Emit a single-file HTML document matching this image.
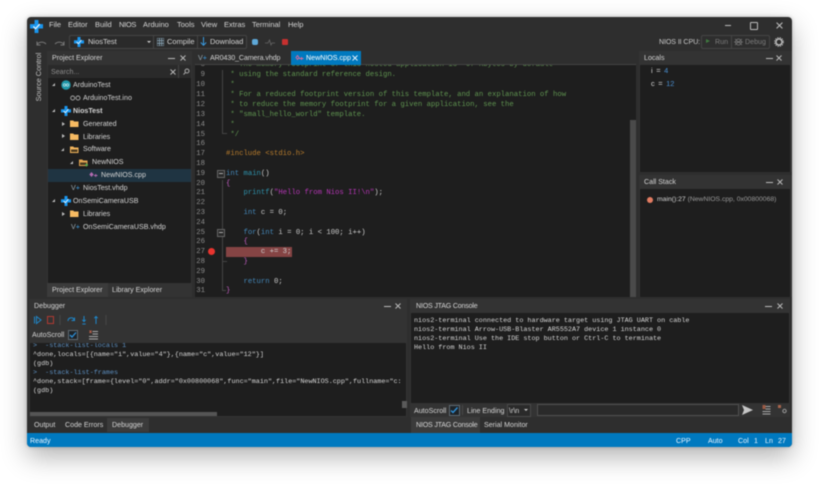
<!DOCTYPE html>
<html><head><meta charset="utf-8"><style>
html,body{margin:0;padding:0;background:#fff;width:819px;height:492px;overflow:hidden}
#s{position:absolute;left:0;top:0;width:819px;height:492px;overflow:hidden;filter:blur(.42px)}
.a,.t,.m,.b{position:absolute}
.t{font:7.1px/10px "Liberation Sans",sans-serif;color:#d4d4d4;white-space:nowrap;transform:translateY(-5px)}
.u{font-size:7.5px}
.m{font:7.28px/10px "Liberation Mono",monospace;color:#cccccc;white-space:pre;transform:translateY(-5px)}
.c{font-size:6.75px;color:#d6d6d6}
.n{color:#8e8e8e;width:13px;text-align:right}
.g{color:#5f9450}.k{color:#4488ba}.f{color:#2f93ad}.p{color:#b535b5}.y{color:#b87c2c}.v{color:#c55fc5}
.b{background:#1e1e1e}
</style></head><body><div id="s">
<svg width="0" height="0" style="position:absolute"><defs>
<g id="lg"><path d="M3.500 0h3v3.200h3.500v3.300h-3.500v3.500h-3v-3.500h-3.500v-3.300h3.500z" fill="#1a96ee"/><path d="M2.600 5l1.700 1.700 3.200-3.600" stroke="#dff2ff" stroke-width="1" fill="none"/></g>
<g id="fo"><path d="M0 1.500h3.200l1 1h4.300v5.500h-8.500z" fill="#f6ba62"/></g>
<g id="cl"><path d="M.5.500l5 5M5.500.500l-5 5" stroke="#bdbdbd" stroke-width=".9" fill="none"/></g>
</defs></svg>

<!-- window -->
<div class="a" style="left:27px;top:17px;width:765px;height:430px;background:#2e2e2e;border-radius:4px;box-shadow:0 10px 26px rgba(0,0,0,.3),0 0 5px rgba(0,0,0,.22);overflow:hidden"></div>

<!-- title bar -->
<svg class="a" style="left:30px;top:20px" width="13" height="13" viewBox="0 0 10 10"><use href="#lg"/></svg>
<div class="t u" style="left:49px;top:25px">File</div>
<div class="t u" style="left:68px;top:25px">Editor</div>
<div class="t u" style="left:95px;top:25px">Build</div>
<div class="t u" style="left:119px;top:25px;letter-spacing:-.3px">NIOS</div>
<div class="t u" style="left:143px;top:25px">Arduino</div>
<div class="t u" style="left:177px;top:25px">Tools</div>
<div class="t u" style="left:201px;top:25px">View</div>
<div class="t u" style="left:224px;top:25px">Extras</div>
<div class="t u" style="left:252px;top:25px">Terminal</div>
<div class="t u" style="left:288px;top:25px">Help</div>
<div class="a" style="left:725px;top:25px;width:6px;height:1px;background:#bbb"></div>
<div class="a" style="left:750px;top:22px;width:6px;height:6px;border:1px solid #bbb;border-radius:1px"></div>
<svg class="a" style="left:776px;top:22px" width="7" height="7" viewBox="0 0 6 6"><use href="#cl"/></svg>

<!-- toolbar -->
<svg class="a" style="left:35px;top:39px" width="32" height="8" fill="none" stroke="#777" stroke-width="1"><path d="M2 6c1-3 6-4 9-1M2 2.500v3.500h3.500"/><path d="M29 6c-1-3-6-4-9-1M29 2.500v3.500h-3.500"/></svg>
<div class="a" style="left:69px;top:35px;width:176px;height:12px;border:1px solid #454545;border-radius:2px;background:#2a2a2a"></div>
<div class="a" style="left:153px;top:36px;width:1px;height:12px;background:#444"></div>
<div class="a" style="left:197px;top:36px;width:1px;height:12px;background:#444"></div>
<svg class="a" style="left:74px;top:37px" width="10" height="10" viewBox="0 0 10 10"><use href="#lg"/></svg>
<div class="t u" style="left:88px;top:42px">NiosTest</div>
<div class="a" style="left:147px;top:41px;border:2.200px solid transparent;border-top:2.500px solid #ccc;border-bottom:0"></div>
<svg class="a" style="left:157px;top:38px" width="7" height="8"><path d="M0 0h7v8h-7zM2.400 0v8M4.700 0v8M0 2.600h7M0 5.300h7" stroke="#8aa6b8" stroke-width=".8" fill="none"/></svg>
<div class="t u" style="left:167px;top:42px">Compile</div>
<svg class="a" style="left:200px;top:37px" width="7" height="10" fill="none" stroke="#3a9be0" stroke-width="1"><path d="M3.500 0v8M.8 5.500l2.700 2.800 2.700-2.800"/></svg>
<div class="t u" style="left:210px;top:42px">Download</div>
<div class="a" style="left:252px;top:39px;width:6px;height:6px;background:#5ea8d8;border-radius:2px"></div>
<svg class="a" style="left:265px;top:39px" width="10" height="7" fill="none" stroke="#666" stroke-width=".8"><path d="M0 4h3l1.500-3 1.500 5 1-2h3"/></svg>
<div class="a" style="left:282px;top:39px;width:6px;height:6px;background:#c6302f;border-radius:1px"></div>

<div class="t" style="left:659px;top:42px;color:#c8c8c8;letter-spacing:-.1px">NIOS II CPU:</div>
<div class="a" style="left:701px;top:35px;width:67px;height:12px;border:1px solid #454545;border-radius:2px"></div>
<div class="a" style="left:731px;top:36px;width:1px;height:12px;background:#454545"></div>
<div class="a" style="left:706px;top:39px;border-left:4px solid #3f7a3f;border-top:2.500px solid transparent;border-bottom:2.500px solid transparent"></div>
<div class="t" style="left:715px;top:42px;color:#7c7c7c">Run</div>
<svg class="a" style="left:734px;top:37px" width="9" height="10" fill="none" stroke="#777" stroke-width=".7"><circle cx="4.500" cy="5" r="3"/><path d="M0 5h9M1 2l7 6M8 2l-7 6"/></svg>
<div class="t" style="left:745px;top:42px;color:#7c7c7c">Debug</div>
<svg class="a" style="left:774px;top:37px" width="10" height="10" fill="none" stroke="#c4c4c4"><circle cx="5" cy="5" r="3" stroke-width="1.300"/><circle cx="5" cy="5" r="4.300" stroke-width="1" stroke-dasharray="1.300 1"/></svg>

<!-- source control -->
<div class="t" style="left:39px;top:77px;transform:translate(-50%,-50%) rotate(-90deg);color:#c4c4c4;font-size:7.300px">Source Control</div>

<!-- project explorer -->
<div class="a" style="left:47px;top:51px;width:145px;height:246px;background:#333"></div>
<div class="a" style="left:48px;top:78px;width:143px;height:205px;background:#1e1e1e"></div>
<div class="a" style="left:48px;top:65px;width:143px;height:13px;background:#2a2a2a"></div>
<div class="a" style="left:178px;top:65px;width:1px;height:13px;background:#444"></div>
<div class="t" style="left:52px;top:58px">Project Explorer</div>
<div class="a" style="left:168px;top:58px;width:7px;height:1px;background:#bbb"></div>
<svg class="a" style="left:180px;top:55px" width="6" height="6"><use href="#cl"/></svg>
<div class="t" style="left:51px;top:71.500px;color:#8c8c8c">Search...</div>
<svg class="a" style="left:170px;top:69px" width="6" height="6"><use href="#cl"/></svg>
<svg class="a" style="left:183px;top:68px" width="7" height="7" fill="none" stroke="#aaa"><circle cx="4" cy="3" r="2"/><path d="M2.500 4.500l-2 2"/></svg>
<div class="a" style="left:48px;top:169px;width:143px;height:13px;background:#1f3442"></div>

<div class="a" style="left:52px;top:83px;border-left:3px solid transparent;border-bottom:3px solid #bbb"></div>
<svg class="a" style="left:61px;top:80px" width="10" height="10"><circle cx="5" cy="5" r="4.700" fill="#1f97a8"/><circle cx="3.500" cy="5" r="1.200" fill="none" stroke="#d8f0f4" stroke-width=".6"/><circle cx="6.500" cy="5" r="1.200" fill="none" stroke="#d8f0f4" stroke-width=".6"/></svg>
<div class="t" style="left:73px;top:85px">ArduinoTest</div>
<svg class="a" style="left:70px;top:95px" width="11" height="6" fill="none" stroke="#a8a8a8" stroke-width=".9"><circle cx="2.700" cy="3" r="2"/><circle cx="8" cy="3" r="2"/></svg>
<div class="t" style="left:83px;top:98px">ArduinoTest.ino</div>

<div class="a" style="left:52px;top:109px;border-left:3px solid transparent;border-bottom:3px solid #bbb"></div>
<svg class="a" style="left:61px;top:106px" width="10" height="10" viewBox="0 0 10 10"><use href="#lg"/></svg>
<div class="t" style="left:73px;top:110.700px;font-weight:bold">NiosTest</div>

<div class="a" style="left:62px;top:122px;border-left:3px solid #bbb;border-top:2.500px solid transparent;border-bottom:2.500px solid transparent"></div>
<svg class="a" style="left:70px;top:119px" width="9" height="9"><use href="#fo"/></svg>
<div class="t" style="left:83px;top:123.500px">Generated</div>
<div class="a" style="left:62px;top:134px;border-left:3px solid #bbb;border-top:2.500px solid transparent;border-bottom:2.500px solid transparent"></div>
<svg class="a" style="left:70px;top:132px" width="9" height="9"><use href="#fo"/></svg>
<div class="t" style="left:83px;top:136.500px">Libraries</div>
<div class="a" style="left:61px;top:148px;border-left:3px solid transparent;border-bottom:3px solid #bbb"></div>
<svg class="a" style="left:70px;top:145px" width="9" height="9"><path d="M0 1.500h3.200l1 1h4.300v5.500h-8.500z" fill="#f2b45c"/><path d="M1 4.500h6.500v2.500h-6.500z" fill="#4a3a20"/></svg>
<div class="t" style="left:83px;top:149.400px">Software</div>
<div class="a" style="left:70px;top:161px;border-left:3px solid transparent;border-bottom:3px solid #bbb"></div>
<svg class="a" style="left:79px;top:158px" width="9" height="9"><path d="M0 1.500h3.200l1 1h4.300v5.500h-8.500z" fill="#e0a452"/><path d="M1 4.500h6.500v2.500h-6.500z" fill="#4a3a20"/><path d="M6 7h3M7.500 5.500v3" stroke="#4caf50"/></svg>
<div class="t" style="left:92px;top:162.300px">NewNIOS</div>
<svg class="a" style="left:89px;top:172px" width="9" height="6" fill="#b06ab0"><path d="M2.500 0l2.200 2.500-2.200 2.500-2.200-2.500z"/><path d="M5 3.500h3.500M6.700 2v3" stroke="#b06ab0" stroke-width=".9"/></svg>
<div class="t" style="left:101px;top:175.200px">NewNIOS.cpp</div>
<div class="t" style="left:71px;top:188px;color:#9aa8b0">V<span style="color:#3d9be0">+</span></div>
<div class="t" style="left:83px;top:188.200px">NiosTest.vhdp</div>
<div class="a" style="left:52px;top:199px;border-left:3px solid transparent;border-bottom:3px solid #bbb"></div>
<svg class="a" style="left:61px;top:196px" width="10" height="10" viewBox="0 0 10 10"><use href="#lg"/></svg>
<div class="t" style="left:73px;top:201px">OnSemiCameraUSB</div>
<div class="a" style="left:62px;top:212px;border-left:3px solid #bbb;border-top:2.500px solid transparent;border-bottom:2.500px solid transparent"></div>
<svg class="a" style="left:70px;top:209px" width="9" height="9"><use href="#fo"/></svg>
<div class="t" style="left:83px;top:214px">Libraries</div>
<div class="t" style="left:71px;top:227px;color:#9aa8b0">V<span style="color:#3d9be0">+</span></div>
<div class="t" style="left:83px;top:227px">OnSemiCameraUSB.vhdp</div>

<div class="a" style="left:47px;top:283px;width:61px;height:14px;background:#3b3b3b"></div>
<div class="t" style="left:52px;top:290px">Project Explorer</div>
<div class="t" style="left:112px;top:290px">Library Explorer</div>

<!-- editor -->
<div class="a b" style="left:195px;top:65px;width:441px;height:232px"></div>
<div class="a" style="left:195px;top:64px;width:441px;height:1px;background:#444"></div>
<div class="t" style="left:198px;top:57.500px;color:#9aa8b0">V<span style="color:#3d9be0">+</span></div>
<div class="t" style="left:210px;top:57.500px;letter-spacing:-.1px">AR0430_Camera.vhdp</div>
<div class="a" style="left:291px;top:51px;width:70px;height:14px;background:#0079bf"></div>
<svg class="a" style="left:295px;top:55px" width="9" height="6" fill="none" stroke="#e06a9a" stroke-width=".9"><path d="M1 2.500l1.500-2 1.500 2-1.500 2zM4 3.500h4.500M6.500 2v3"/></svg>
<div class="t" style="left:306px;top:57.500px;color:#fff">NewNIOS.cpp</div>
<svg class="a" style="left:352px;top:55px" width="6" height="6"><path d="M.5.500l5 5M5.500.500l-5 5" stroke="#e8f4ff" stroke-width=".9"/></svg>
<div class="a" style="left:222px;top:180px;width:1px;height:110px;background:#444"></div>
<div class="a" style="left:222px;top:70px;width:1px;height:64px;background:#444"></div>
<div class="a" style="left:222px;top:133px;width:5px;height:1px;background:#444"></div>
<div class="a" style="left:222px;top:261px;width:5px;height:1px;background:#444"></div>
<div class="a" style="left:222px;top:290px;width:4px;height:1px;background:#444"></div>
<div class="a" style="left:217px;top:170px;width:6px;height:6px;border:1px solid #666;background:#2a2a2a"></div>
<div class="a" style="left:219px;top:173px;width:4px;height:1px;background:#aaa"></div>
<div class="a" style="left:217px;top:229px;width:6px;height:6px;border:1px solid #666;background:#2a2a2a"></div>
<div class="a" style="left:219px;top:232px;width:4px;height:1px;background:#aaa"></div>
<div class="a" style="left:226px;top:247px;width:66px;height:10px;background:#854444"></div>
<div class="a" style="left:208px;top:248px;width:7px;height:7px;border-radius:50%;background:#e8342f"></div>
<div class="a" style="left:630px;top:120px;width:6px;height:177px;background:#4a4a4a"></div>

<div class="a" style="left:195px;top:65px;width:435px;height:232px;overflow:hidden">
<div class="m n" style="left:-3px;top:0px">8</div><div class="m g" style="left:31px;top:0px"> * The memory footprint of this hosted application is ~67 Kbytes by default</div>
<div class="m n" style="left:-3px;top:10px">9</div><div class="m g" style="left:31px;top:10px"> * using the standard reference design.</div>
<div class="m n" style="left:-3px;top:20px">10</div><div class="m g" style="left:31px;top:20px"> *</div>
<div class="m n" style="left:-3px;top:29.600px">11</div><div class="m g" style="left:31px;top:29.600px"> * For a reduced footprint version of this template, and an explanation of how</div>
<div class="m n" style="left:-3px;top:40px">12</div><div class="m g" style="left:31px;top:40px"> * to reduce the memory footprint for a given application, see the</div>
<div class="m n" style="left:-3px;top:50px">13</div><div class="m g" style="left:31px;top:50px"> * "small_hello_world" template.</div>
<div class="m n" style="left:-3px;top:59.600px">14</div><div class="m g" style="left:31px;top:59.600px"> *</div>
<div class="m n" style="left:-3px;top:69.500px">15</div><div class="m g" style="left:31px;top:69.500px"> */</div>
<div class="m n" style="left:-3px;top:79px">16</div>
<div class="m n" style="left:-3px;top:89px">17</div><div class="m y" style="left:31px;top:89px">#include &lt;stdio.h&gt;</div>
<div class="m n" style="left:-3px;top:99px">18</div>
<div class="m n" style="left:-3px;top:108.700px">19</div><div class="m" style="left:31px;top:108.700px"><span class="k">int</span> <span class="f">main</span>()</div>
<div class="m n" style="left:-3px;top:118.500px">20</div><div class="m v" style="left:31px;top:118.500px">{</div>
<div class="m n" style="left:-3px;top:128.300px">21</div><div class="m" style="left:31px;top:128.300px">    <span class="f">printf</span>(<span class="p">"Hello from Nios II!\n"</span>);</div>
<div class="m n" style="left:-3px;top:138.100px">22</div>
<div class="m n" style="left:-3px;top:147.900px">23</div><div class="m" style="left:31px;top:147.900px">    <span class="k">int</span> c = 0;</div>
<div class="m n" style="left:-3px;top:157.700px">24</div>
<div class="m n" style="left:-3px;top:167.500px">25</div><div class="m" style="left:31px;top:167.500px">    <span class="k">for</span>(<span class="k">int</span> i = 0; i &lt; 100; i++)</div>
<div class="m n" style="left:-3px;top:177.300px">26</div><div class="m v" style="left:31px;top:177.300px">    {</div>
<div class="m n" style="left:-3px;top:187.100px">27</div><div class="m" style="left:31px;top:187.100px">        c += 3;</div>
<div class="m n" style="left:-3px;top:196.900px">28</div><div class="m v" style="left:31px;top:196.900px">    }</div>
<div class="m n" style="left:-3px;top:206.700px">29</div>
<div class="m n" style="left:-3px;top:216.500px">30</div><div class="m" style="left:31px;top:216.500px">    <span class="k">return</span> 0;</div>
<div class="m n" style="left:-3px;top:226.300px">31</div><div class="m v" style="left:31px;top:226.300px">}</div>
</div>

<!-- locals -->
<div class="a" style="left:639px;top:51px;width:153px;height:121px;background:#333"></div>
<div class="a b" style="left:640px;top:65px;width:150px;height:107px"></div>
<div class="t" style="left:644px;top:58px">Locals</div>
<div class="a" style="left:766px;top:58px;width:7px;height:1px;background:#bbb"></div>
<svg class="a" style="left:776px;top:55px" width="6" height="6"><use href="#cl"/></svg>
<div class="t" style="left:651px;top:71px;font-size:7.400px;word-spacing:1.500px">i = <span style="color:#4a8fd0">4</span></div>
<div class="t" style="left:651px;top:84px;font-size:7.400px;word-spacing:1.500px">c = <span style="color:#4a8fd0">12</span></div>

<!-- call stack -->
<div class="a" style="left:639px;top:175px;width:153px;height:122px;background:#333"></div>
<div class="a b" style="left:640px;top:189px;width:150px;height:108px"></div>
<div class="t" style="left:644px;top:182px">Call Stack</div>
<div class="a" style="left:766px;top:182px;width:7px;height:1px;background:#bbb"></div>
<svg class="a" style="left:777px;top:179px" width="6" height="6"><use href="#cl"/></svg>
<div class="a" style="left:647px;top:197px;width:6px;height:6px;border-radius:50%;background:#e27c62"></div>
<div class="t" style="left:657px;top:200px;font-size:6.800px">main():27 <span style="color:#9a9a9a">(NewNIOS.cpp, 0x00800068)</span></div>

<!-- debugger -->
<div class="a" style="left:29px;top:299px;width:378px;height:118px;background:#333"></div>
<div class="a b" style="left:30px;top:343px;width:376px;height:73px"></div>
<div class="t" style="left:34px;top:306px">Debugger</div>
<div class="a" style="left:384px;top:306px;width:7px;height:1px;background:#bbb"></div>
<svg class="a" style="left:395px;top:303px" width="6" height="6"><use href="#cl"/></svg>
<svg class="a" style="left:34px;top:315px" width="76" height="10" fill="none" stroke-width="1"><path d="M.5 1.500v7M2.500 1.500l4.500 3.500-4.500 3.500z" stroke="#1f86c9"/><rect x="13.500" y="1.500" width="6" height="7" stroke="#b03a32"/><path d="M26 0v10M72 0v10" stroke="#484848"/><path d="M34 6c0-3.500 5-4.500 6-1M40.500 2.500v3h-3" stroke="#1f86c9"/><path d="M50 1v5.500M48.300 4.800l1.700 1.700 1.700-1.700M48.300 9h3.400" stroke="#1f86c9"/><path d="M62 9v-7.500M60.300 3.200l1.700-1.700 1.700 1.700" stroke="#1f86c9"/></svg>
<div class="t" style="left:32px;top:335px">AutoScroll</div>
<div class="a" style="left:68px;top:330px;width:8px;height:8px;border:1px solid #5f6a72;background:#1d2328"></div>
<svg class="a" style="left:69px;top:331px" width="8" height="8" fill="none" stroke="#2f90d8" stroke-width="1.300"><path d="M1 4l2 2 4-4.500"/></svg>
<svg class="a" style="left:89px;top:330px" width="9" height="10"><path d="M3.500 1.500h5.500M3.500 4h5.500M0 6.500h9M0 9h9" stroke="#aaa"/><path d="M.5.500l2 2.500M2.500.500l-2 2.500" stroke="#c4654c"/></svg>
<div class="a" style="left:30px;top:412px;width:187px;height:4px;background:#555"></div>
<div class="a" style="left:402px;top:401px;width:5px;height:7px;background:#5a5a5a"></div>
<div class="a" style="left:30px;top:343px;width:376px;height:68px;overflow:hidden;font-size:0">
<div class="m c" style="left:3px;top:3px;color:#5d90c2">&gt;  -stack-list-locals 1</div>
<div class="m c" style="left:3px;top:12px">^done,locals=[{name="i",value="4"},{name="c",value="12"}]</div>
<div class="m c" style="left:3px;top:21px">(gdb)</div>
<div class="m c" style="left:3px;top:30px;color:#5d90c2">&gt;  -stack-list-frames</div>
<div class="m c" style="left:3px;top:39.300px">^done,stack=[frame={level="0",addr="0x00800068",func="main",file="NewNIOS.cpp",fullname="c:</div>
<div class="m c" style="left:3px;top:48.300px">(gdb)</div>
</div>
<div class="t" style="left:34px;top:425px">Output</div>
<div class="t" style="left:65px;top:425px">Code Errors</div>
<div class="a" style="left:107px;top:418px;width:42px;height:14px;background:#3b3b3b"></div>
<div class="t" style="left:112px;top:425px">Debugger</div>

<!-- jtag console -->
<div class="a" style="left:410px;top:299px;width:380px;height:118px;background:#333"></div>
<div class="a b" style="left:411px;top:313px;width:378px;height:90px"></div>
<div class="t" style="left:416px;top:306px;letter-spacing:-.2px">NIOS JTAG Console</div>
<div class="a" style="left:765px;top:306px;width:7px;height:1px;background:#bbb"></div>
<svg class="a" style="left:777px;top:303px" width="6" height="6"><use href="#cl"/></svg>
<div class="m c" style="left:414px;top:320.500px">nios2-terminal connected to hardware target using JTAG UART on cable</div>
<div class="m c" style="left:414px;top:330px">nios2-terminal Arrow-USB-Blaster AR5552A7 device 1 instance 0</div>
<div class="m c" style="left:414px;top:339px">nios2-terminal Use the IDE stop button or Ctrl-C to terminate</div>
<div class="m c" style="left:414px;top:348px">Hello from Nios II</div>
<div class="t" style="left:414px;top:410.500px">AutoScroll</div>
<div class="a" style="left:449px;top:405px;width:9px;height:9px;border:1px solid #5f6a72;background:#1d2328"></div>
<svg class="a" style="left:450px;top:406px" width="9" height="9" fill="none" stroke="#2f90d8" stroke-width="1.400"><path d="M1 4.500l2 2 4.500-5"/></svg>
<div class="a" style="left:462px;top:405px;width:1px;height:10px;background:#484848"></div>
<div class="t" style="left:467px;top:410.500px">Line Ending</div>
<div class="a" style="left:507px;top:404px;width:22px;height:11px;border:1px solid #4a4a4a;background:#2a2a2a"></div>
<div class="t" style="left:509px;top:410.500px">\r\n</div>
<div class="a" style="left:524px;top:409px;border:2px solid transparent;border-top:2.500px solid #ccc;border-bottom:0"></div>
<div class="a" style="left:537px;top:404px;width:200px;height:10px;border:1px solid #4f4f4f;background:#2a2a2a"></div>
<svg class="a" style="left:742px;top:405px" width="12" height="10"><path d="M0 0l11 5-11 5 2-5z" fill="#c6c6c6"/></svg>
<svg class="a" style="left:762px;top:405px" width="9" height="10"><path d="M3.500 1.500h5M3.500 4h5M.5 6.500h8M.5 9h8" stroke="#aaa"/><rect x=".5" y="0" width="3" height="4" fill="#9c5a44"/></svg>
<svg class="a" style="left:778px;top:405px" width="9" height="9" fill="none"><rect x="0" y="0" width="3" height="3" fill="#a8654c"/><circle cx="6.500" cy="6" r="1.700" stroke="#999"/></svg>
<div class="a" style="left:411px;top:417px;width:69px;height:16px;background:#3b3b3b"></div>
<div class="t" style="left:416px;top:425px;letter-spacing:-.2px">NIOS JTAG Console</div>
<div class="t" style="left:484px;top:425px">Serial Monitor</div>

<!-- status -->
<div class="a" style="left:27px;top:433px;width:765px;height:14px;background:#0079bf;border-radius:0 0 4px 4px"></div>
<div class="t" style="left:30px;top:441px;color:#e8f4ff">Ready</div>
<div class="t" style="left:676px;top:440.500px;color:#e8f4ff">CPP</div>
<div class="t" style="left:708px;top:440.500px;color:#e8f4ff">Auto</div>
<div class="t" style="left:738px;top:440.500px;color:#e8f4ff">Col</div>
<div class="t" style="left:754px;top:440.500px;color:#e8f4ff">1</div>
<div class="t" style="left:765px;top:440.500px;color:#e8f4ff">Ln</div>
<div class="t" style="left:778px;top:440.500px;color:#e8f4ff">27</div>
</div></body></html>
